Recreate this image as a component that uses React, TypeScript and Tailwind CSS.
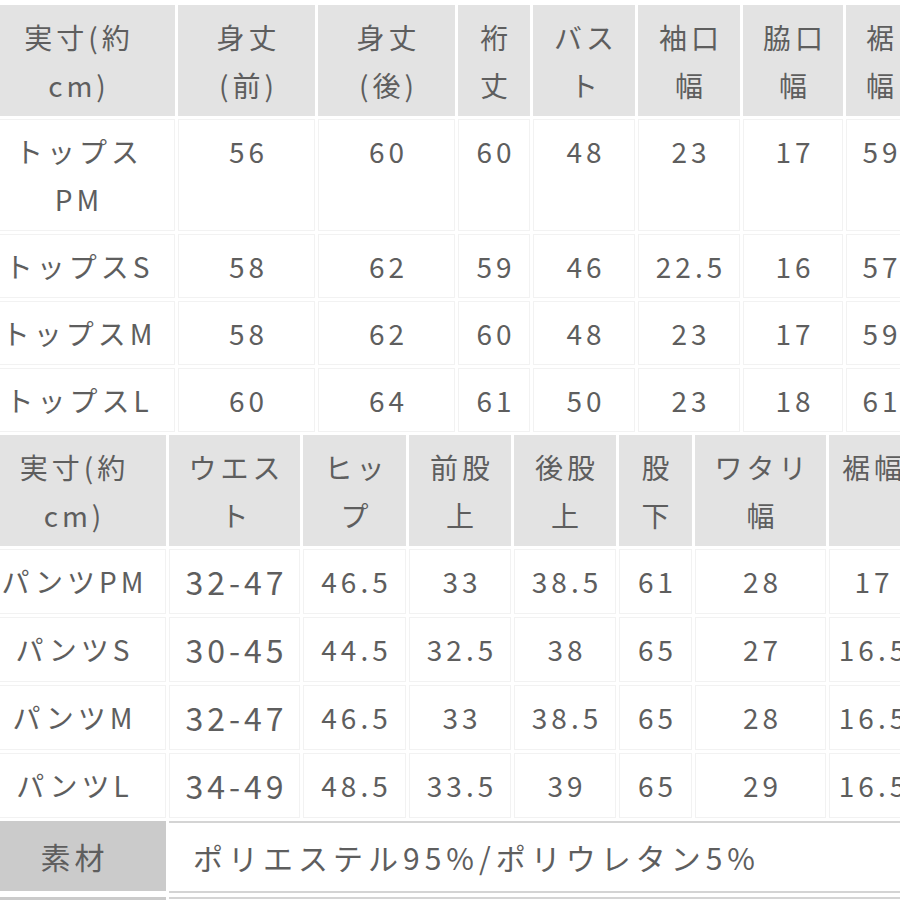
import React from "react";

const FONT = {
  fontFamily: '"Noto Sans CJK JP", "Noto Sans", sans-serif',
};

type Cell = React.ReactNode;

const topHead: Cell[] = [
  <>実寸(約<br />cm)</>,
  <>身丈<br />(前)</>,
  <>身丈<br />(後)</>,
  <>裄<br />丈</>,
  <>バス<br />ト</>,
  <>袖口<br />幅</>,
  <>脇口<br />幅</>,
  <>裾<br />幅</>,
];

const topRows: Cell[][] = [
  [<>トップス<br />PM</>, "56", "60", "60", "48", "23", "17", "59"],
  ["トップスS", "58", "62", "59", "46", "22.5", "16", "57"],
  ["トップスM", "58", "62", "60", "48", "23", "17", "59"],
  ["トップスL", "60", "64", "61", "50", "23", "18", "61"],
];

const bottomHead: Cell[] = [
  <>実寸(約<br />cm)</>,
  <>ウエス<br />ト</>,
  <>ヒッ<br />プ</>,
  <>前股<br />上</>,
  <>後股<br />上</>,
  <>股<br />下</>,
  <>ワタリ<br />幅</>,
  <>裾幅</>,
];

const bottomRows: string[][] = [
  ["パンツPM", "32-47", "46.5", "33", "38.5", "61", "28", "17"],
  ["パンツS", "30-45", "44.5", "32.5", "38", "65", "27", "16.5"],
  ["パンツM", "32-47", "46.5", "33", "38.5", "65", "28", "16.5"],
  ["パンツL", "34-49", "48.5", "33.5", "39", "65", "29", "16.5"],
];

function HeadCell({ children }: { children: Cell }) {
  return (
    <div className="bg-[#e3e3e3] pt-[8px] pb-[7px] pl-[4px] text-center text-[28px] leading-[48px] tracking-[4px] text-[#5e5e5e] whitespace-nowrap">
      {children}
    </div>
  );
}

function TopCell({ children }: { children: Cell }) {
  return (
    <div className="border border-[#f2f2f2] bg-white pt-[7px] pb-[7px] pl-[4px] text-center text-[28px] leading-[48px] tracking-[4px] text-[#5e5e5e] whitespace-nowrap">
      {children}
    </div>
  );
}

function BottomCell({ children, big }: { children: Cell; big?: boolean }) {
  return (
    <div
      className={
        "border border-[#f2f2f2] bg-white pt-[7px] pb-[8px] pl-[4px] text-center leading-[48px] tracking-[4px] text-[#5e5e5e] whitespace-nowrap " +
        (big ? "text-[32px]" : "text-[28px]")
      }
    >
      {children}
    </div>
  );
}

export default function App() {
  return (
    <div className="w-[900px] h-[900px] overflow-hidden bg-white" style={FONT}>
      <div className="-ml-[21px] pt-[5px] flex flex-col gap-[3px] w-[950px]">
        <div className="grid grid-cols-[196px_137px_137px_72px_102px_102px_100px_68px] gap-[3px]">
          {topHead.map((h, i) => (
            <HeadCell key={"th" + i}>{h}</HeadCell>
          ))}
          {topRows.map((r, ri) =>
            r.map((c, ci) => <TopCell key={"t" + ri + "-" + ci}>{c}</TopCell>)
          )}
        </div>
        <div className="grid grid-cols-[187px_131px_103px_102px_102px_73px_131px_86px] gap-[3px]">
          {bottomHead.map((h, i) => (
            <HeadCell key={"bh" + i}>{h}</HeadCell>
          ))}
          {bottomRows.map((r, ri) =>
            r.map((c, ci) => (
              <BottomCell key={"b" + ri + "-" + ci} big={ci === 1}>
                {c}
              </BottomCell>
            ))
          )}
        </div>
        <div className="flex gap-[3px]">
          <div className="w-[187px] h-[70px] bg-[#cbcbcb] flex items-center justify-center pl-[4px] text-[30px] tracking-[4px] text-[#5e5e5e]">
            素材
          </div>
          <div className="flex-1 h-[72px] border-t-2 border-b-2 border-[#d4d4d4] bg-white flex items-center pl-[24px] text-[30px] tracking-[5px] text-[#5e5e5e] whitespace-nowrap">
            ポリエステル95%/ポリウレタン5%
          </div>
        </div>
        <div className="flex gap-[3px] mt-[1px]">
          <div className="w-[187px] h-[70px] bg-[#cbcbcb]" />
          <div className="flex-1 h-[70px] border-t-2 border-[#d4d4d4] bg-white" />
        </div>
      </div>
    </div>
  );
}
